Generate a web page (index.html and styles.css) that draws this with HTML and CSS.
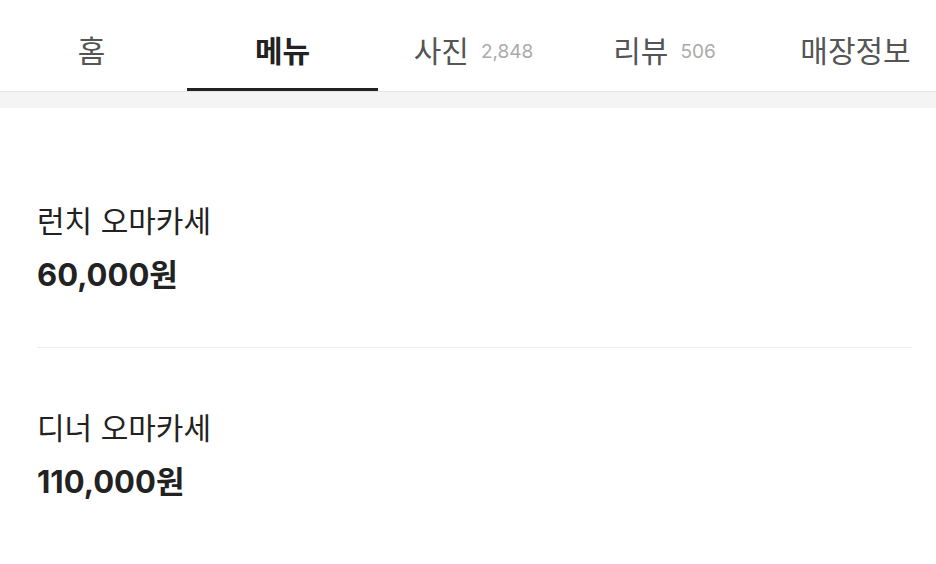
FILE: index.html
```html
<!DOCTYPE html>
<html lang="ko">
<head>
<meta charset="utf-8">
<title>메뉴</title>
<link rel="stylesheet" href="styles.css">
</head>
<body>
<nav class="tabs">
  <div class="tab-track">
    <a class="tab">홈</a>
    <a class="tab active">메뉴</a>
    <a class="tab">사진<span class="count">2,848</span></a>
    <a class="tab">리뷰<span class="count">506</span></a>
    <a class="tab">매장정보</a>
  </div>
</nav>
<div class="band"></div>
<section class="menu">
  <div class="item">
    <div class="name">런치 오마카세</div>
    <div class="price">60,000원</div>
  </div>
  <div class="item">
    <div class="name">디너 오마카세</div>
    <div class="price">110,000원</div>
  </div>
</section>
</body>
</html>
```
FILE: styles.css
```css
html, body {
  margin: 0;
  padding: 0;
  background: #fff;
  font-family: Inter, "Noto Sans CJK KR", sans-serif;
  color: #222;
}
.tabs {
  height: 91px;
  border-bottom: 1px solid #e4e4e4;
  overflow: hidden;
}
.tab-track {
  display: flex;
  margin-left: -4px;
  height: 100%;
}
.tab {
  flex: 0 0 191px;
  display: flex;
  align-items: center;
  justify-content: center;
  box-sizing: border-box;
  padding-top: 10px;
  font-size: 30px;
  color: #555;
  border-bottom: 3px solid transparent;
}
.tab.active {
  color: #222;
  font-weight: 700;
  border-bottom-color: #222;
}
.count {
  font-size: 19px;
  color: #aaa;
  margin-left: 12px;
  padding-top: 4px;
}
.band {
  height: 16px;
  background: #f4f4f4;
}
.menu {
  padding: 33px 24px 0 37px;
}
.item {
  padding: 60px 0 52px;
  display: flex;
  flex-direction: column;
  gap: 14px;
}
.item + .item {
  border-top: 1px solid #eeeeee;
}
.name {
  font-size: 30px;
  line-height: 40px;
  color: #222;
}
.price {
  font-size: 31px;
  line-height: 40px;
  font-weight: 700;
  color: #222;
}
```
